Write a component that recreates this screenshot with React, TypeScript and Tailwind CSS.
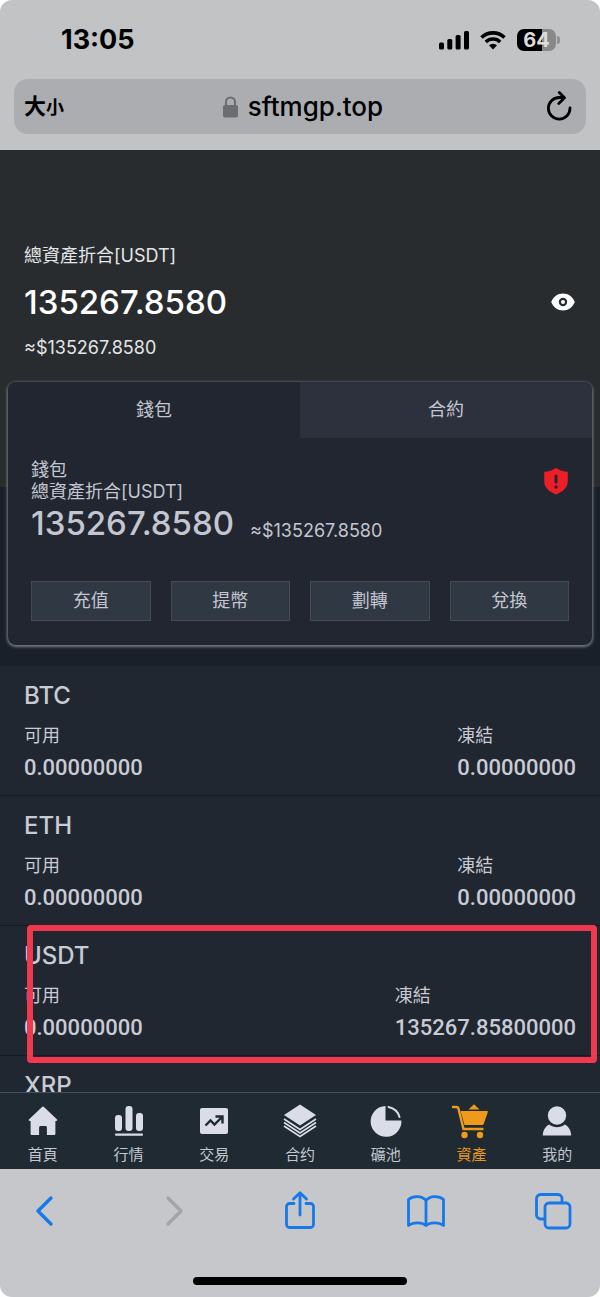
import { useState, type ReactNode } from "react";
import clsx from "clsx";

interface Asset {
  symbol: string;
  balance?: { available: string; frozen: string };
  marked?: boolean;
}

const assets: Asset[] = [
  {
    symbol: "BTC",
    balance: { available: "0.00000000", frozen: "0.00000000" },
  },
  {
    symbol: "ETH",
    balance: { available: "0.00000000", frozen: "0.00000000" },
  },
  {
    symbol: "USDT",
    balance: { available: "0.00000000", frozen: "135267.85800000" },
    marked: true,
  },
  { symbol: "XRP" },
];

const actions = ["充值", "提幣", "劃轉", "兌換"];

const navItems: { label: string; icon: ReactNode; active?: boolean }[] = [
  {
    label: "首頁",
    icon: (
      <path d="M18 3.600c.5 0 .8.2 1.200.6L31.600 16c1.200 1.200.9 2-.6 2h-.6v12.500c0 1-.5 1.500-1.500 1.500h-7v-7.300c0-1-.6-1.700-1.600-1.700h-4.600c-1 0-1.600.7-1.600 1.700V32h-7c-1 0-1.500-.5-1.500-1.500V18H5c-1.500 0-1.800-.8-.6-2L16.800 4.200c.4-.4.7-.6 1.200-.6z" />
    ),
  },
  {
    label: "行情",
    icon: (
      <>
        <rect x="4" y="12" width="7" height="16" rx="3" />
        <rect x="14.500" y="3" width="7" height="25" rx="3" />
        <rect x="25" y="10" width="7" height="18" rx="3" />
        <rect x="4" y="30.500" width="28" height="2.200" rx="1" />
      </>
    ),
  },
  {
    label: "交易",
    icon: (
      <>
        <rect x="4" y="5" width="28" height="26" rx="2" />
        <path
          d="M9.500 22.500l5-5 4 4 7.500-7.500M19.500 13.500h7v7"
          fill="none"
          stroke="#1f2a33"
          strokeWidth="2.400"
        />
      </>
    ),
  },
  {
    label: "合约",
    icon: (
      <>
        <path d="M18 1.500L34 12 18 22.500 2 12z" />
        <path
          d="M2 16L18 26.500 34 16M2 19.500L18 30l16-10.500M2 23L18 33.500 34 23"
          fill="none"
          stroke="currentColor"
          strokeWidth="1.600"
        />
      </>
    ),
  },
  {
    label: "礦池",
    icon: (
      <>
        <path d="M17.500 3v14.500h15.900A15.400 15.400 0 1 1 17.500 3z" />
        <path
          d="M20.500 4c5.500 1.200 9.600 4.800 11 10"
          fill="none"
          stroke="currentColor"
          strokeWidth="2"
          strokeLinecap="round"
        />
      </>
    ),
  },
  {
    label: "資產",
    active: true,
    icon: (
      <>
        <path d="M15.500 6.500L21 1.200l5.500 5.300z" />
        <path d="M7.500 8H34c.6 0 1 .5.8 1.200l-4 11.600c-.2.700-.8 1.200-1.500 1.200H11.500z" />
        <path
          d="M0 4h3.500c1 0 1.600.5 1.900 1.400L10.500 26h19"
          fill="none"
          stroke="currentColor"
          strokeWidth="2.400"
          strokeLinecap="round"
        />
        <circle cx="11.500" cy="32" r="3.200" />
        <circle cx="27" cy="32" r="3.200" />
      </>
    ),
  },
  {
    label: "我的",
    icon: (
      <>
        <circle cx="18" cy="12.500" r="9.200" />
        <path d="M10.200 21.600c4.600 3.600 11 3.600 15.600 0 3.800 2 6.200 5.600 6.400 10.900H3.800c.2-5.300 2.600-8.900 6.400-10.900z" />
      </>
    ),
  },
];

const browserTools: { label: string; icon: ReactNode; disabled?: boolean }[] = [
  { label: "返回", icon: <path d="M27 7L14 20l13 13" strokeWidth="3.400" /> },
  {
    label: "前進",
    disabled: true,
    icon: <path d="M16 7l13 13-13 13" strokeWidth="3.400" />,
  },
  {
    label: "分享",
    icon: (
      <path d="M14 12.500H9.500a3 3 0 0 0-3 3v18a3 3 0 0 0 3 3h21a3 3 0 0 0 3-3v-18a3 3 0 0 0-3-3H26M20 24V2M13.500 8L20 1.800 26.500 8" />
    ),
  },
  {
    label: "書籤",
    icon: (
      <path d="M18 9.500C14 4.500 5 4.500 .5 8.500v26C5 31 14 31 18 34.500c4-3.500 13-3.500 17.500 0v-26C31 4.500 22 4.500 18 9.500zM18 9.500v25" />
    ),
  },
  {
    label: "分頁",
    icon: (
      <>
        <path d="M8 28H4.500a4 4 0 0 1-4-4V7.500a4 4 0 0 1 4-4H22a4 4 0 0 1 4 4V11" />
        <rect x="9" y="12" width="25" height="25" rx="4" />
      </>
    ),
  },
];

function StatusBar() {
  return (
    <div className="flex h-[79px] items-center justify-between pr-10 pl-[61px] text-black">
      <span className="text-[27px] font-bold leading-8">13:05</span>
      <div className="flex items-center gap-[11px]">
        <svg width="30" height="20" viewBox="0 0 30 20" fill="currentColor">
          <rect x="0" y="12.500" width="5" height="7" rx="1.500" />
          <rect x="8.300" y="9" width="5" height="10.500" rx="1.500" />
          <rect x="16.600" y="5" width="5" height="14.500" rx="1.500" />
          <rect x="25" y="1" width="5" height="18.500" rx="1.500" />
        </svg>
        <svg width="26" height="20" viewBox="0 0 26 20" fill="none" stroke="currentColor">
          <path d="M1.500 7.500a16.500 16.500 0 0 1 23 0" strokeWidth="3.600" />
          <path d="M5.800 12a10.300 10.300 0 0 1 14.400 0" strokeWidth="3.400" />
          <path
            d="M13 19.500l-4-4.200a5.800 5.800 0 0 1 8 0z"
            fill="currentColor"
            stroke="none"
          />
        </svg>
        <div className="flex items-center gap-px">
          <div className="flex h-[22px] w-[39px] items-center justify-center rounded-[7px] bg-linear-to-r from-black from-64% to-[#88898b] to-64% text-xl font-bold text-[#dcdcde]">
            64
          </div>
          <div className="h-2 w-[3px] rounded-r-full bg-[#8f9092]" />
        </div>
      </div>
    </div>
  );
}

function AddressBar() {
  return (
    <div className="mx-[14px] mb-4 flex h-[55px] items-center justify-between rounded-[14px] bg-[#acadb1] pr-3 pl-[10px] text-black">
      <button type="button" className="flex w-12 items-baseline font-bold">
        <span className="text-[22px]">大</span>
        <span className="text-lg">小</span>
      </button>
      <div className="flex items-center gap-[10px]">
        <svg width="15" height="22" viewBox="0 0 15 22">
          <path
            d="M3 10V6a4.500 4.500 0 0 1 9 0v4"
            fill="none"
            stroke="#6c6d71"
            strokeWidth="2"
          />
          <rect y="9" width="15" height="12.500" rx="2" fill="#6c6d71" />
        </svg>
        <span className="text-[26px] font-medium leading-8">sftmgp.top</span>
      </div>
      <button type="button" aria-label="重新載入" className="flex w-10 justify-end">
        <svg
          width="30"
          height="32"
          viewBox="0 0 30 32"
          fill="none"
          stroke="currentColor"
          strokeWidth="2.800"
          strokeLinecap="round"
          strokeLinejoin="round"
        >
          <path d="M26 17a10.800 10.800 0 1 1-10.800-10.500H20M15.300 1.500L20.500 6.800l-5.700 5.700" />
        </svg>
      </button>
    </div>
  );
}

function Summary() {
  const [hidden, setHidden] = useState(false);

  return (
    <section className="bg-[#282c2e] px-6 pt-[92px] pb-[125px] text-[#e4e5e7]">
      <p className="text-lg leading-7">總資產折合[USDT]</p>
      <div className="mt-3 flex items-center justify-between text-white">
        <span className="text-[33px] font-medium leading-10">
          {hidden ? "******" : "135267.8580"}
        </span>
        <button
          type="button"
          aria-label="顯示資產"
          onClick={() => setHidden(!hidden)}
        >
          <svg width="26" height="20" viewBox="0 0 26 20" fill="currentColor">
            <path
              fillRule="evenodd"
              d="M13 1.500c5.300 0 9.800 3.400 11.800 8.500-2 5.100-6.500 8.500-11.800 8.500S3.200 15.100 1.200 10C3.200 4.900 7.700 1.500 13 1.500zM13 5.800a4.200 4.200 0 1 0 0 8.400 4.200 4.200 0 0 0 0-8.400zM13 8a2 2 0 1 1 0 4 2 2 0 0 1 0-4z"
            />
          </svg>
        </button>
      </div>
      <p className="mt-3 text-lg leading-7">≈$135267.8580</p>
    </section>
  );
}

function WalletCard() {
  const [tab, setTab] = useState("錢包");

  return (
    <section className="relative mx-2 -mt-[105px] mb-[21px] overflow-hidden rounded-lg bg-[#212631] text-[#c3c6d0] shadow-[0_1px_3px_1px_#777b82]">
      <div className="grid grid-cols-2">
        {["錢包", "合約"].map((name) => (
          <button
            key={name}
            type="button"
            onClick={() => setTab(name)}
            className={clsx(
              "h-14 text-lg",
              tab === name ? "bg-[#212631]" : "bg-[#2d313d]"
            )}
          >
            {name}
          </button>
        ))}
      </div>
      <div className="px-[23px] pt-[21px] pb-6">
        <div className="flex items-start justify-between">
          <div className="text-lg leading-[22px]">
            <p>錢包</p>
            <p>總資產折合[USDT]</p>
          </div>
          <svg width="26" height="28" viewBox="0 0 26 28" className="mt-2">
            <path
              d="M13 1c3.500 2.400 7.300 3.700 11.800 3.800v9.400c0 6-4.600 10.500-11.800 13.200C5.800 24.700 1.200 20.200 1.200 14.200V4.800C5.700 4.700 9.500 3.400 13 1z"
              fill="#ec1f29"
            />
            <rect x="11.500" y="7.500" width="3" height="9" rx="1.500" fill="#212631" />
            <circle cx="13" cy="20" r="1.700" fill="#212631" />
          </svg>
        </div>
        <div className="flex items-end gap-4">
          <span className="text-[33px] font-medium leading-10">135267.8580</span>
          <span className="text-lg leading-6">≈$135267.8580</span>
        </div>
        <div className="mt-[38px] grid grid-cols-4 gap-5">
          {actions.map((action) => (
            <button
              key={action}
              type="button"
              className="h-10 border border-[#464a51] bg-[#303843] text-lg"
            >
              {action}
            </button>
          ))}
        </div>
      </div>
    </section>
  );
}

function Amount({ label, value }: { label: string; value: string }) {
  return (
    <div>
      <dt className="text-lg leading-6">{label}</dt>
      <dd className="mt-[6px] font-['Roboto',sans-serif] text-[22px] font-medium leading-7">
        {value}
      </dd>
    </div>
  );
}

function AssetRow({ asset }: { asset: Asset }) {
  return (
    <li className="relative border-b border-[#151a23] px-6 pt-4 pb-[13px]">
      <h2 className="text-2xl font-medium leading-7">{asset.symbol}</h2>
      {asset.balance && (
        <dl className="mt-[14px] flex justify-between">
          <Amount label="可用" value={asset.balance.available} />
          <Amount label="凍結" value={asset.balance.frozen} />
        </dl>
      )}
      {asset.marked && (
        <div className="absolute -top-px right-[3px] -bottom-2 left-[27px] z-10 rounded-sm border-6 border-[#f0384f]" />
      )}
    </li>
  );
}

function BottomNav() {
  return (
    <nav className="grid shrink-0 grid-cols-7 border-t border-[#43545c] bg-[#1f2a33]">
      {navItems.map((item) => (
        <a
          key={item.label}
          href="#"
          className={clsx(
            "flex h-[76px] flex-col items-center gap-1 pt-[10px]",
            item.active ? "text-[#e8961e]" : "text-[#c3c7cf]"
          )}
        >
          <svg
            width="36"
            height="36"
            viewBox="0 0 36 36"
            className={clsx(
              "overflow-visible",
              item.active ? "text-[#f09a1c]" : "text-[#dadde8]"
            )}
            fill="currentColor"
          >
            {item.icon}
          </svg>
          <span className="text-[15px] leading-6">{item.label}</span>
        </a>
      ))}
    </nav>
  );
}

function BrowserToolbar() {
  return (
    <footer className="h-32 shrink-0 rounded-b-xl bg-[#c6c7cb]">
      <div className="flex justify-between px-6 pt-[22px]">
        {browserTools.map((tool) => (
          <button
            key={tool.label}
            type="button"
            aria-label={tool.label}
            disabled={tool.disabled}
            className={tool.disabled ? "text-[#a3a4a8]" : "text-[#1778e8]"}
          >
            <svg
              width="40"
              height="40"
              viewBox="0 0 40 40"
              className="overflow-visible"
              fill="none"
              stroke="currentColor"
              strokeWidth="2.800"
              strokeLinecap="round"
              strokeLinejoin="round"
            >
              {tool.icon}
            </svg>
          </button>
        ))}
      </div>
      <div className="mx-auto mt-[46px] h-2 w-[214px] rounded-full bg-black" />
    </footer>
  );
}

export default function App() {
  return (
    <div className="flex h-screen flex-col bg-white font-['Inter','Noto_Sans_CJK_TC',sans-serif]">
      <header className="shrink-0 rounded-t-xl bg-[#c2c3c5]">
        <StatusBar />
        <AddressBar />
      </header>
      <main className="min-h-0 flex-1 overflow-y-auto bg-[#1a202a] [scrollbar-width:none]">
        <Summary />
        <WalletCard />
        <ul className="bg-[#212731] text-[#c8cbd4]">
          {assets.map((asset) => (
            <AssetRow key={asset.symbol} asset={asset} />
          ))}
        </ul>
      </main>
      <BottomNav />
      <BrowserToolbar />
    </div>
  );
}
